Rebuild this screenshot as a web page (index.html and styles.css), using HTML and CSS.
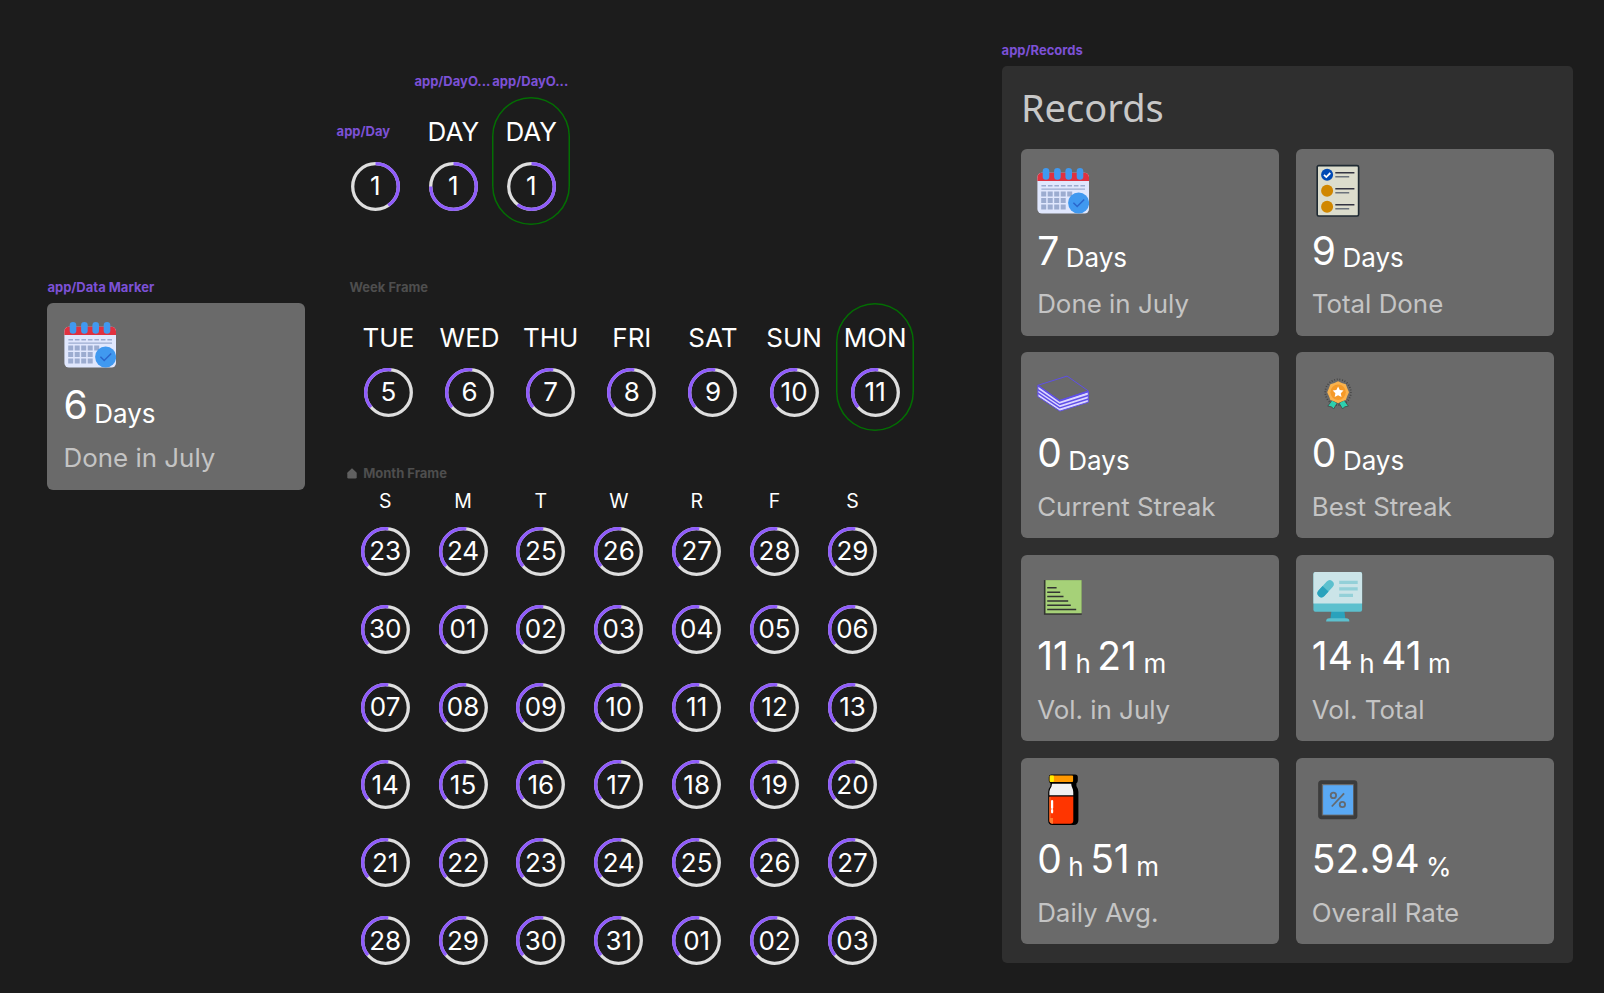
FILE: index.html
```html
<!DOCTYPE html>
<html lang="en">
<head>
<meta charset="utf-8">
<title>Components</title>
<link rel="stylesheet" href="styles.css">
</head>
<body>
<svg class="defs" aria-hidden="true">
  <defs>
    <symbol id="ring" viewBox="0 0 49 49">
      <circle class="track" cx="24.5" cy="24.5" r="22.8"/>
      <circle class="arc" cx="24.5" cy="24.5" r="22.8" pathLength="360" stroke-dasharray="137 223" transform="rotate(140 24.5 24.5)"/>
    </symbol>
    <symbol id="calendar" viewBox="0 0 52 52">
      <rect x="0.4" y="7.8" width="51.6" height="40.7" rx="4.5" fill="#e0e7fd"/>
      <path d="M0.4 15.9V12.3a4.5 4.5 0 0 1 4.5-4.5H47.5a4.5 4.5 0 0 1 4.5 4.5V15.9z" fill="#e0313f"/>
      <g fill="#4099f0"><rect x="5.7" y="3" width="6.6" height="11.8" rx="3.3"/><rect x="17.1" y="3" width="6.6" height="11.8" rx="3.3"/><rect x="28.4" y="3" width="6.6" height="11.8" rx="3.3"/><rect x="39.7" y="3" width="6.6" height="11.8" rx="3.3"/></g>
      <path d="M4.4 20.8H48" stroke="#9cacd0" stroke-width="1.4" stroke-dasharray="4.6 1.9"/>
      <path d="M4.4 24.1H48" stroke="#9cacd0" stroke-width="1.3"/>
      <path d="M4.2 29.1H35.2M4.2 35.5H29M4.2 42.1H29" stroke="#9cacd0" stroke-width="5" stroke-dasharray="5 1.5"/>
      <circle cx="41.6" cy="38" r="10.5" fill="#4099f0"/>
      <path d="M36.4 37.8L40.2 41.5 47.2 34.5" fill="none" stroke="#2a66cc" stroke-width="1.5"/>
    </symbol>
  </defs>
</svg>

<main class="canvas">
  <section class="frame frame-day">
    <h2 class="label">app/Day</h2>
    <div class="day"><svg class="ring" viewBox="0 0 49 49"><circle class="track" cx="24.5" cy="24.5" r="22.8"/><circle class="arc" cx="24.5" cy="24.5" r="22.8" pathLength="360" stroke-dasharray="146 214" transform="rotate(-90 24.5 24.5)"/></svg><span>1</span></div>
  </section>

  <section class="frame frame-dayof">
    <div class="variant">
      <h2 class="label">app/DayO...</h2>
      <div class="weekday"><span class="name">DAY</span><div class="day"><svg class="ring" viewBox="0 0 49 49"><circle class="track" cx="24.5" cy="24.5" r="22.8"/><circle class="arc" cx="24.5" cy="24.5" r="22.8" pathLength="360" stroke-dasharray="270 90" transform="rotate(-90 24.5 24.5)"/></svg><span>1</span></div></div>
    </div>
    <div class="variant">
      <h2 class="label">app/DayO...</h2>
      <div class="weekday today"><span class="name">DAY</span><div class="day"><svg class="ring" viewBox="0 0 49 49"><circle class="track" cx="24.5" cy="24.5" r="22.8"/><circle class="arc" cx="24.5" cy="24.5" r="22.8" pathLength="360" stroke-dasharray="218 142" transform="rotate(-90 24.5 24.5)"/></svg><span>1</span></div></div>
    </div>
  </section>

  <section class="frame frame-marker">
    <h2 class="label">app/Data Marker</h2>
    <article class="card">
      <svg class="icon"><use href="#calendar"/></svg>
      <p class="value"><b>6</b><i>Days</i></p>
      <p class="caption">Done in July</p>
    </article>
  </section>

  <section class="frame frame-week">
    <h2 class="label muted">Week Frame</h2>
    <div class="week">
      <div class="weekday"><span class="name">TUE</span><div class="day"><svg class="ring"><use href="#ring"/></svg><span>5</span></div></div>
      <div class="weekday"><span class="name">WED</span><div class="day"><svg class="ring"><use href="#ring"/></svg><span>6</span></div></div>
      <div class="weekday"><span class="name">THU</span><div class="day"><svg class="ring"><use href="#ring"/></svg><span>7</span></div></div>
      <div class="weekday"><span class="name">FRI</span><div class="day"><svg class="ring"><use href="#ring"/></svg><span>8</span></div></div>
      <div class="weekday"><span class="name">SAT</span><div class="day"><svg class="ring"><use href="#ring"/></svg><span>9</span></div></div>
      <div class="weekday"><span class="name">SUN</span><div class="day"><svg class="ring"><use href="#ring"/></svg><span>10</span></div></div>
      <div class="weekday today"><span class="name">MON</span><div class="day"><svg class="ring"><use href="#ring"/></svg><span>11</span></div></div>
    </div>
  </section>

  <section class="frame frame-month">
    <h2 class="label muted"><svg class="home" viewBox="0 0 10 11"><path d="M5 0.3L9.3 4.2Q9.7 4.6 9.7 5.2V9.2Q9.7 10.5 8.4 10.5H1.6Q0.3 10.5 0.3 9.2V5.2Q0.3 4.6 0.7 4.2z"/></svg>Month Frame</h2>
    <div class="month">
      <span class="initial">S</span><span class="initial">M</span><span class="initial">T</span><span class="initial">W</span><span class="initial">R</span><span class="initial">F</span><span class="initial">S</span>
      <div class="day"><svg class="ring"><use href="#ring"/></svg><span>23</span></div>
      <div class="day"><svg class="ring"><use href="#ring"/></svg><span>24</span></div>
      <div class="day"><svg class="ring"><use href="#ring"/></svg><span>25</span></div>
      <div class="day"><svg class="ring"><use href="#ring"/></svg><span>26</span></div>
      <div class="day"><svg class="ring"><use href="#ring"/></svg><span>27</span></div>
      <div class="day"><svg class="ring"><use href="#ring"/></svg><span>28</span></div>
      <div class="day"><svg class="ring"><use href="#ring"/></svg><span>29</span></div>
      <div class="day"><svg class="ring"><use href="#ring"/></svg><span>30</span></div>
      <div class="day"><svg class="ring"><use href="#ring"/></svg><span>01</span></div>
      <div class="day"><svg class="ring"><use href="#ring"/></svg><span>02</span></div>
      <div class="day"><svg class="ring"><use href="#ring"/></svg><span>03</span></div>
      <div class="day"><svg class="ring"><use href="#ring"/></svg><span>04</span></div>
      <div class="day"><svg class="ring"><use href="#ring"/></svg><span>05</span></div>
      <div class="day"><svg class="ring"><use href="#ring"/></svg><span>06</span></div>
      <div class="day"><svg class="ring"><use href="#ring"/></svg><span>07</span></div>
      <div class="day"><svg class="ring"><use href="#ring"/></svg><span>08</span></div>
      <div class="day"><svg class="ring"><use href="#ring"/></svg><span>09</span></div>
      <div class="day"><svg class="ring"><use href="#ring"/></svg><span>10</span></div>
      <div class="day"><svg class="ring"><use href="#ring"/></svg><span>11</span></div>
      <div class="day"><svg class="ring"><use href="#ring"/></svg><span>12</span></div>
      <div class="day"><svg class="ring"><use href="#ring"/></svg><span>13</span></div>
      <div class="day"><svg class="ring"><use href="#ring"/></svg><span>14</span></div>
      <div class="day"><svg class="ring"><use href="#ring"/></svg><span>15</span></div>
      <div class="day"><svg class="ring"><use href="#ring"/></svg><span>16</span></div>
      <div class="day"><svg class="ring"><use href="#ring"/></svg><span>17</span></div>
      <div class="day"><svg class="ring"><use href="#ring"/></svg><span>18</span></div>
      <div class="day"><svg class="ring"><use href="#ring"/></svg><span>19</span></div>
      <div class="day"><svg class="ring"><use href="#ring"/></svg><span>20</span></div>
      <div class="day"><svg class="ring"><use href="#ring"/></svg><span>21</span></div>
      <div class="day"><svg class="ring"><use href="#ring"/></svg><span>22</span></div>
      <div class="day"><svg class="ring"><use href="#ring"/></svg><span>23</span></div>
      <div class="day"><svg class="ring"><use href="#ring"/></svg><span>24</span></div>
      <div class="day"><svg class="ring"><use href="#ring"/></svg><span>25</span></div>
      <div class="day"><svg class="ring"><use href="#ring"/></svg><span>26</span></div>
      <div class="day"><svg class="ring"><use href="#ring"/></svg><span>27</span></div>
      <div class="day"><svg class="ring"><use href="#ring"/></svg><span>28</span></div>
      <div class="day"><svg class="ring"><use href="#ring"/></svg><span>29</span></div>
      <div class="day"><svg class="ring"><use href="#ring"/></svg><span>30</span></div>
      <div class="day"><svg class="ring"><use href="#ring"/></svg><span>31</span></div>
      <div class="day"><svg class="ring"><use href="#ring"/></svg><span>01</span></div>
      <div class="day"><svg class="ring"><use href="#ring"/></svg><span>02</span></div>
      <div class="day"><svg class="ring"><use href="#ring"/></svg><span>03</span></div>
    </div>
  </section>

  <section class="frame frame-records">
    <h2 class="label">app/Records</h2>
    <div class="records">
      <h1 class="title">Records</h1>
      <div class="cards">
        <article class="card">
          <svg class="icon"><use href="#calendar"/></svg>
          <p class="value"><b>7</b><i>Days</i></p>
          <p class="caption">Done in July</p>
        </article>
        <article class="card">
          <svg class="icon" viewBox="0 0 52 52">
            <rect x="5.2" y="0.6" width="41.4" height="50.4" rx="1.5" fill="#dcddcd" stroke="#1f2a33" stroke-width="1.6"/>
            <circle cx="15.1" cy="9.8" r="6" fill="#0049b4"/>
            <path d="M12 9.9L14.3 12.1 18.3 8" fill="none" stroke="#fff" stroke-width="1.8"/>
            <g fill="#d08700"><circle cx="15.1" cy="25.8" r="6"/><circle cx="15.1" cy="41.8" r="6"/></g>
            <path d="M23.3 7.8H42.4M23.3 23.8H42.4M23.3 39.8H42.4" stroke="#333442" stroke-width="1.6"/>
            <path d="M23.3 11.8H37.2M23.3 27.8H37.2M23.3 43.8H37.2" stroke="#6b737c" stroke-width="1.6"/>
          </svg>
          <p class="value"><b>9</b><i>Days</i></p>
          <p class="caption">Total Done</p>
        </article>
        <article class="card">
          <svg class="icon" viewBox="0 0 52 52" stroke-linejoin="round">
            <path d="M0.9 17.2L22.5 32.6 51.3 23.6V34.2L22.9 43.1 0.9 28.6z" fill="#dcd6ff" stroke="#5f4fe8" stroke-width="1"/>
            <path d="M30.1 8.1L51.3 22.9 22.5 32.4 0.9 17.3z" fill="#6a6a6a" stroke="#5f4fe8" stroke-width="1"/>
            <path d="M0.9 17.6L22.5 33 51.3 23.7M0.9 21.6L22.6 36.5 51.3 27.5M0.9 25.2L22.7 39.9 51.3 31" fill="none" stroke="#5f4fe8" stroke-width="1.4"/>
          </svg>
          <p class="value"><b>0</b><i>Days</i></p>
          <p class="caption">Current Streak</p>
        </article>
        <article class="card">
          <svg class="icon" viewBox="0 0 52 52">
            <circle cx="26.1" cy="24.2" r="12.8" fill="none" stroke="#424242" stroke-width="1.8" pathLength="90" stroke-dasharray="1 2"/>
            <path d="M20 32.2L25.3 34.9 21.6 41 19.7 38.9 15.8 38.1zM32.2 32.2L26.9 34.9 30.6 41 32.5 38.9 36.4 38.1z" fill="#2dd0ae" stroke="#454545" stroke-width="0.8"/>
            <path d="M26.1 13.2L29.8 14.9 33.8 16.3 35.3 20.2 37 24.2 35.3 28.1 33.8 32 29.8 33.5 26.1 35.2 22.4 33.5 18.4 32 16.9 28.1 15.2 24.2 16.9 20.2 18.4 16.3 22.4 14.9z" fill="#f9b24d"/>
            <circle cx="26.1" cy="24.2" r="7.7" fill="#f59a28"/>
            <path d="M26.1 18.6L27.8 22.1 31.5 22.6 28.8 25.3 29.5 29.1 26.1 27.3 22.7 29.1 23.4 25.3 20.7 22.6 24.4 22.1z" fill="#fff"/>
          </svg>
          <p class="value"><b>0</b><i>Days</i></p>
          <p class="caption">Best Streak</p>
        </article>
        <article class="card">
          <svg class="icon" viewBox="0 0 52 52">
            <rect x="6.9" y="9.1" width="37.8" height="34.7" fill="#333"/>
            <rect x="8.5" y="9.1" width="36.2" height="33.2" fill="#a6d178"/>
            <path d="M10.2 16.8H19.6M10.2 21.2H23.2M10.2 25.5H26.5M10.2 29.9H31.2M10.2 34.3H33.8M10.2 38.6H39.2" stroke="#333" stroke-width="1.5"/>
          </svg>
          <p class="value"><b>11</b><i>h</i><b>21</b><i>m</i></p>
          <p class="caption">Vol. in July</p>
        </article>
        <article class="card">
          <svg class="icon" viewBox="0 0 52 52">
            <path d="M19.4 40H32.4L33.4 48H18.4z" fill="#2aa2bc"/>
            <path d="M14.1 50.4Q14.1 47.2 17.3 47.2H34.2Q37.4 47.2 37.4 50.4z" fill="#5cc0ce"/>
            <rect x="1.4" y="1.1" width="48.7" height="39.7" rx="2" fill="#5cc0ce"/>
            <path d="M1.4 32.4V3.1a2 2 0 0 1 2-2H48.1a2 2 0 0 1 2 2V32.4z" fill="#cbe4e8"/>
            <path d="M9.4 22.3L17.7 13.2" stroke="#5cc0ce" stroke-width="8" stroke-linecap="round"/>
            <path d="M10.6 14.9L16.5 20.4 12.4 25A4 4 0 0 1 6.5 19.6z" fill="#2aa2bc"/>
            <path d="M27.2 11.4H45.7M27.2 17.8H45.7M27.2 24.4H41" stroke="#93d0d8" stroke-width="3.2"/>
          </svg>
          <p class="value"><b>14</b><i>h</i><b>41</b><i>m</i></p>
          <p class="caption">Vol. Total</p>
        </article>
        <article class="card">
          <svg class="icon" viewBox="0 0 52 52">
            <path d="M14 0.4H38Q40.8 0.4 40.8 3V6.5Q40.8 8.5 39.4 9.2V12Q41.4 15 41.4 18V46Q41.4 51 36.4 51H15.5Q11.2 51 11.2 46.6V18Q11.2 15 13.5 12V9.2Q11.8 8.5 11.8 6.5V3Q11.8 0.4 14 0.4z" fill="#000"/>
            <rect x="12.7" y="1.6" width="23.4" height="6.3" rx="1" fill="#ff9800"/>
            <rect x="12.7" y="1.6" width="4.2" height="6.3" rx="1" fill="#ffee00"/>
            <path d="M15 9.8H34.2Q34.2 12.4 35.9 15.5 36.3 17 36.3 21.2H12.4V17.5Q12.8 15 14.5 12.5z" fill="#f1f0f1"/>
            <path d="M12.4 22.5H36.3V46.5Q36.3 49.8 33 49.8H15.6Q12.4 49.8 12.4 46.5z" fill="#ff3500"/>
            <path d="M12.4 23V46.5Q12.4 49.4 16 49.8V44H13.4V23z" fill="#ff7a30"/>
            <path d="M15.1 27V34M15.1 36V38.3" stroke="#fff" stroke-width="2.2" stroke-linecap="round"/>
          </svg>
          <p class="value"><b>0</b><i>h</i><b>51</b><i>m</i></p>
          <p class="caption">Daily Avg.</p>
        </article>
        <article class="card">
          <svg class="icon" viewBox="0 0 52 52">
            <rect x="8" y="8.1" width="35.5" height="35.2" rx="1.4" fill="none" stroke="#3c3c3c" stroke-width="3.7"/>
            <rect x="11.1" y="11.2" width="30" height="29.4" fill="#5aa9f4"/>
            <g fill="none" stroke="#646a70" stroke-width="1.8"><circle cx="21.4" cy="21.4" r="2.7"/><circle cx="30.4" cy="30.5" r="2.7"/><path d="M32.1 19.4L19.8 32.5"/></g>
          </svg>
          <p class="value"><b>52.94</b><i>%</i></p>
          <p class="caption">Overall Rate</p>
        </article>
      </div>
    </div>
  </section>
</main>
</body>
</html>
```
FILE: styles.css
```css
* { box-sizing: border-box; margin: 0; padding: 0; }

body {
  width: 1604px;
  height: 993px;
  overflow: hidden;
  background: #1c1c1c;
  color: #fff;
  font-family: Inter, "Liberation Sans", sans-serif;
}

.defs { position: absolute; width: 0; height: 0; }

.canvas { position: relative; width: 1604px; height: 993px; }

/* Frames placed freely on the design canvas */
.frame { position: absolute; }
.frame-day { left: 336.6px; top: 123px; }
.frame-dayof { left: 414.4px; top: 73px; display: flex; }
.frame-marker { left: 47.4px; top: 279.2px; width: 258px; }
.frame-week { left: 349.5px; top: 279.2px; }
.frame-month { left: 346.2px; top: 465.2px; }
.frame-records { left: 1001.6px; top: 42.2px; width: 571.4px; }

.label {
  height: 24.1px;
  line-height: 16px;
  font-size: 13px;
  font-weight: 650;
  color: #7c51d6;
  white-space: nowrap;
}
.label.muted { color: #4e4e4e; }
.home { width: 10px; height: 11px; margin: 0 6px 0 1px; fill: #606060; vertical-align: -1px; }

.ring { grid-area: 1 / 1; width: 49px; height: 49px; display: block; }
.track, .arc { fill: none; stroke-width: 3.3; }
.track { stroke: #dedede; }
.arc { stroke: #8f5cfb; }

.day { display: grid; place-items: center; width: 49px; height: 49px; }
.day span { grid-area: 1 / 1; font-size: 26px; line-height: 31.4px; margin-top: -1px; }
.frame-day .day { margin: 14.6px 0 0 14.2px; }

.weekday {
  display: flex;
  flex-direction: column;
  align-items: center;
  gap: 14.4px;
  width: 77.9px;
  height: 128px;
  padding-top: 18.8px;
}
.weekday.today { border-radius: 39px; box-shadow: inset 0 0 0 1.5px #036e03; }
.name { font-size: 26px; line-height: 31.4px; }

.week { display: flex; gap: 3.24px; }
.frame-week .label { margin-left: 0; }

.month { display: grid; grid-template-columns: repeat(7, 77.9px); grid-template-rows: 23.1px repeat(6, 77.9px); place-items: center; }
.initial { font-size: 19.5px; line-height: 23.6px; padding-top: 1.4px; }

.records { height: 896.8px; padding: 19.4px; border-radius: 5px; background: #2f2f2f; }
.title {
  height: 63.4px;
  padding-top: 1px;
  font: 400 38px/41.5px "Noto Sans", sans-serif;
  letter-spacing: 0;
  color: #c8c8c8;
}
.cards { display: grid; grid-template-columns: 258px 258px; gap: 16.4px 16.6px; }

.card {
  display: flex;
  flex-direction: column;
  height: 186.5px;
  padding: 16.2px;
  border-radius: 6px;
  background: #6a6a6a;
}
.icon { flex: none; width: 52px; height: 52px; overflow: visible; }
.card:nth-child(odd) .icon { margin-left: -0.4px; }
.value { display: flex; align-items: flex-end; gap: 6.5px; margin: 9.3px 0 14.4px; height: 47.1px; }
.value b { font-size: 39px; line-height: 47.1px; font-weight: 400; }
.value i { font-size: 26px; line-height: 31.4px; font-style: normal; }
.frame-marker .value i { margin-bottom: -2px; }
.caption { font-size: 25.9px; line-height: 31.4px; color: #c4c4c4; white-space: nowrap; }
```
